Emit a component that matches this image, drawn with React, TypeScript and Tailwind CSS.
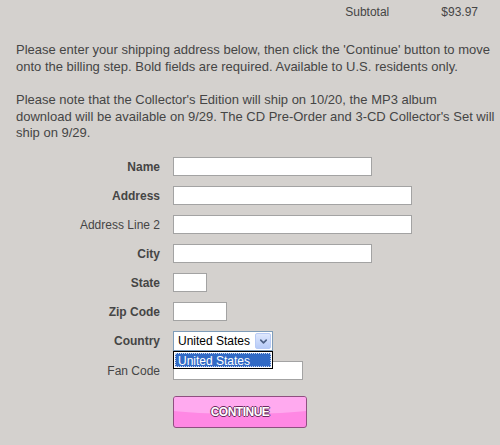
import { ChevronDown } from "lucide-react";

interface Field {
  label: string;
  width: string;
  bold: boolean;
}

const fields: Field[] = [
  { label: "Name", width: "w-[199px]", bold: true },
  { label: "Address", width: "w-[239px]", bold: true },
  { label: "Address Line 2", width: "w-[239px]", bold: false },
  { label: "City", width: "w-[199px]", bold: true },
  { label: "State", width: "w-[34px]", bold: true },
  { label: "Zip Code", width: "w-[54px]", bold: true },
];

function Row({ label, bold, children }: { label: string; bold: boolean; children: React.ReactNode }) {
  return (
    <div className="flex items-center">
      <label className={`w-[160px] text-right text-[12px] leading-[14px] ${bold ? "font-bold" : ""}`}>
        {label}
      </label>
      <div className="ml-[13px] relative">{children}</div>
    </div>
  );
}

export default function App() {
  return (
    <div className="w-[500px] h-[445px] overflow-hidden bg-[#d4d1ce] text-[#454545] font-['Liberation_Sans',Arial,sans-serif]">
      {/* Subtotal */}
      <div className="flex justify-end pr-[22px] pt-1 text-[12px] leading-[16px]">
        <span>Subtotal</span>
        <span className="ml-[52px]">$93.97</span>
      </div>

      {/* Intro text */}
      <div className="mt-[22px] pl-4 w-[496px] text-[13px] leading-[16.67px]">
        <p>
          Please enter your shipping address below, then click the 'Continue' button to move onto the
          billing step. Bold fields are required. Available to U.S. residents only.
        </p>
        <p className="mt-[16.67px]">
          Please note that the Collector's Edition will ship on 10/20, the MP3 album download will be
          available on 9/29. The CD Pre-Order and 3-CD Collector's Set will ship on 9/29.
        </p>
      </div>

      {/* Form */}
      <form className="mt-[15px] flex flex-col gap-[10px]">
        {fields.map((f) => (
          <Row key={f.label} label={f.label} bold={f.bold}>
            <input
              type="text"
              className={`${f.width} h-[19px] block border border-[#a3a3a3] bg-white outline-none`}
            />
          </Row>
        ))}

        <Row label="Country" bold={true}>
          <div className="w-[100px] h-[20px] border border-[#7f9db9] bg-white flex items-center relative">
            <span className="pl-[4px] text-[12px] leading-[14px] text-black">United States</span>
            <div className="absolute right-[1px] top-[1px] w-[16px] h-[16px] rounded-[2px] border border-[#b8cbf6] bg-gradient-to-b from-[#dfe8fd] to-[#b7cbf7] flex items-center justify-center">
              <ChevronDown size={11} strokeWidth={3.5} className="text-[#4d6185]" />
            </div>
          </div>
          {/* open list */}
          <div className="absolute left-0 top-[20px] w-[100px] h-[18px] border border-black bg-white p-[1px] z-10">
            <div className="h-full bg-[#316ac5] outline outline-1 outline-dotted outline-[#c8d6f0] -outline-offset-1 text-white text-[12px] leading-[14px] pl-[3px] pt-[1px]">
              United States
            </div>
          </div>
        </Row>

        <Row label="Fan Code" bold={false}>
          <input type="text" className="w-[130px] h-[19px] block border border-[#a3a3a3] bg-white outline-none" />
        </Row>

        <div className="ml-[173px] mt-[6px]">
          <button
            type="button"
            className="relative w-[134px] h-[32px] rounded-[3px] border border-[#8f4f80] bg-[#ff88e4] overflow-hidden flex items-center justify-center"
          >
            <span className="absolute left-[-20px] right-[-20px] top-0 h-[17px] rounded-b-[50%] bg-[#ffaaef]" />
            <span className="relative text-white font-bold text-[12px] tracking-[-0.5px] leading-[14px] [text-shadow:1px_0_0_#6b2b5e,-1px_0_0_#6b2b5e,0_1px_0_#6b2b5e,0_-1px_0_#6b2b5e]">
              CONTINUE
            </span>
          </button>
        </div>
      </form>
    </div>
  );
}
